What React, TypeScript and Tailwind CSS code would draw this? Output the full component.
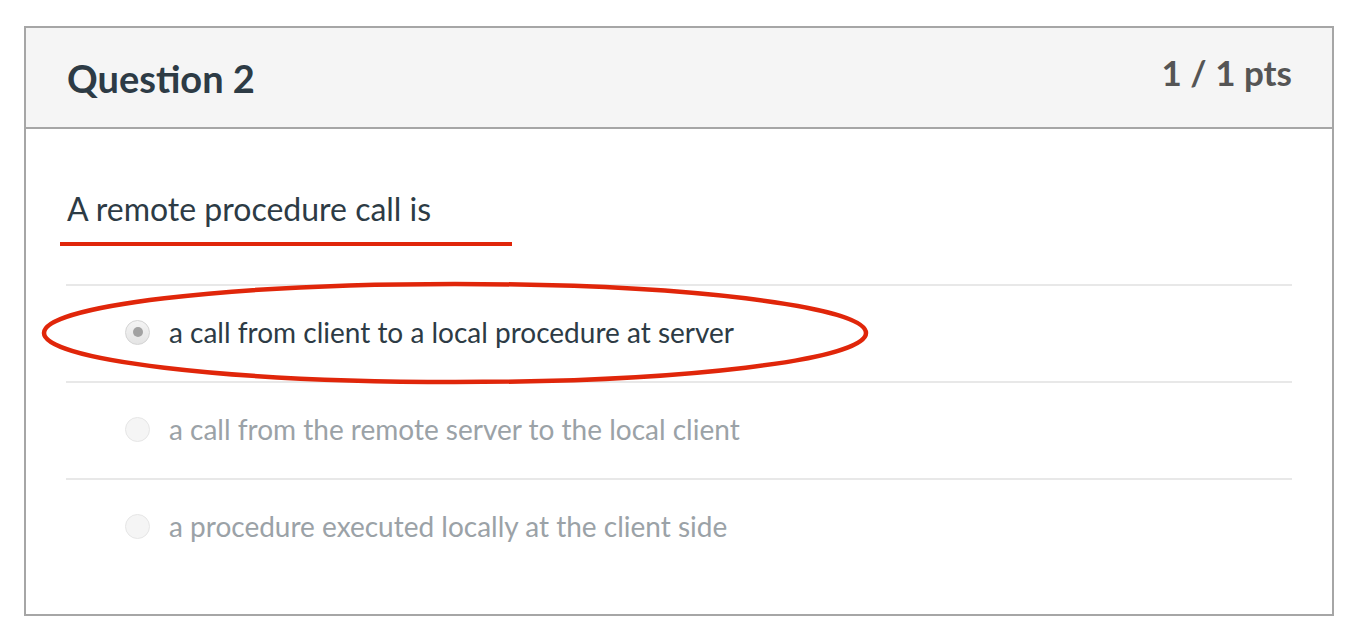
import React from "react";

const answers = [
  { text: "a call from client to a local procedure at server", selected: true },
  { text: "a call from the remote server to the local client", selected: false },
  { text: "a procedure executed locally at the client side", selected: false },
];

function Radio({ selected }: { selected: boolean }) {
  if (selected) {
    return (
      <span className="flex h-[25px] w-[25px] shrink-0 items-center justify-center rounded-full border border-[#d4d4d4] bg-gradient-to-b from-[#f4f4f4] to-[#e4e4e4]">
        <span className="h-[10px] w-[10px] rounded-full bg-[#a2a2a2]" />
      </span>
    );
  }
  return <span className="h-[25px] w-[25px] shrink-0 rounded-full border border-[#e6e6e6] bg-[#f5f5f5]" />;
}

export default function App() {
  return (
    <div className="min-h-screen bg-white pl-[24px] pr-[35px] pt-[26px] font-['Lato','Noto_Sans',sans-serif]">
      <div className="relative border-2 border-[#a6a6a6]">
        {/* header */}
        <div className="flex h-[101px] items-start justify-between border-b-2 border-[#a6a6a6] bg-[#f5f5f5] pl-[41px] pr-[40px]">
          <h2 className="mt-[28px] text-[38px] font-bold leading-[44px] text-[#2d3b45]">Question 2</h2>
          <div className="mt-[24px] text-[35px] font-bold leading-[40px] text-[#555555]">1 / 1 pts</div>
        </div>

        {/* body */}
        <div className="px-[40px] pb-[39px] pt-[60px]">
          <p className="pl-[1px] text-[32px] leading-[40px] text-[#2d3b45]">A remote procedure call is</p>
          <div className="mt-[55px]">
            {answers.map((a) => (
              <div key={a.text} className="flex h-[97px] items-center border-t-2 border-[#e8e8e8] pb-[3px] pl-[59px]">
                <Radio selected={a.selected} />
                <span
                  className={`ml-[19px] text-[28px] leading-[34px] ${a.selected ? "text-[#2d3b45]" : "text-[#9ba2a7]"}`}
                >
                  {a.text}
                </span>
              </div>
            ))}
          </div>
        </div>

        {/* red annotations drawn over the card */}
        <div className="pointer-events-none absolute left-[34px] top-[214px] h-[4px] w-[452px] bg-[#e0260a]" />
        <svg className="pointer-events-none absolute left-[14px] top-[252px]" width="830" height="106" viewBox="0 0 830 106">
          <ellipse cx="415" cy="53" rx="411" ry="49" fill="none" stroke="#e0260a" strokeWidth="4.5" />
        </svg>
      </div>
    </div>
  );
}
